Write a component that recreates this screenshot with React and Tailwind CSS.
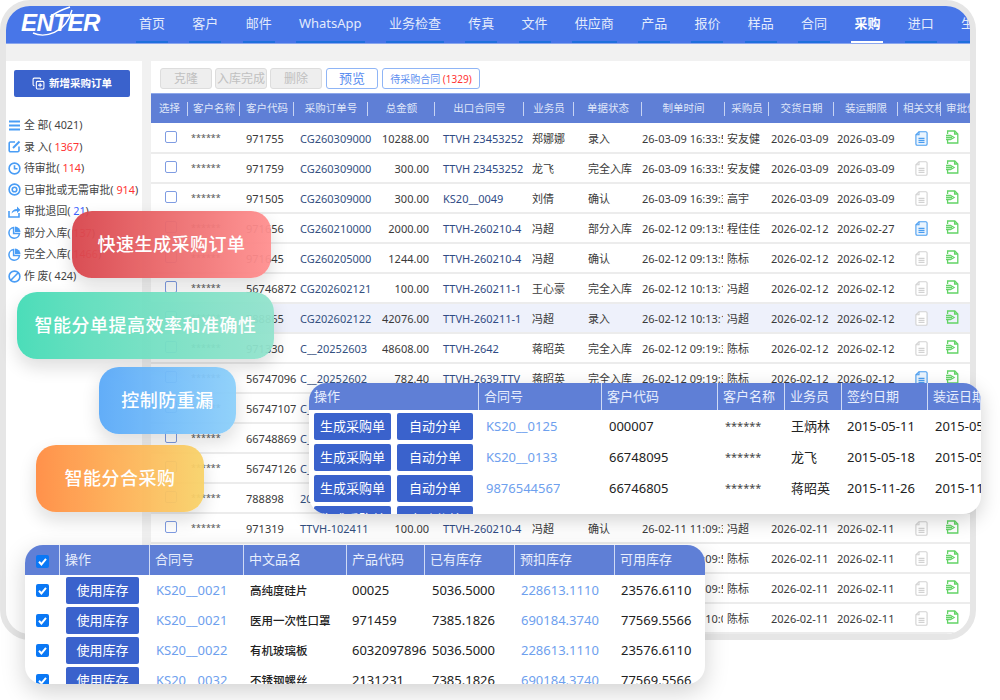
import React from "react";
import { CopyPlus } from "lucide-react";

const FONT = "font-['Noto_Sans','Noto_Sans_CJK_SC',sans-serif]";

const navItems = ["首页", "客户", "邮件", "WhatsApp", "业务检查", "传真", "文件", "供应商", "产品", "报价", "样品", "合同", "采购", "进口", "生产"];

const statusItems = [
  { label: "全 部(", count: "4021", tone: "text-[#444]", icon: "list" },
  { label: "录 入(", count: "1367", tone: "text-[#f33]", icon: "edit" },
  { label: "待审批(", count: "114", tone: "text-[#f33]", icon: "clock" },
  { label: "已审批或无需审批(", count: "914", tone: "text-[#f33]", icon: "target" },
  { label: "审批退回(", count: "21", tone: "text-[#3a62ff]", icon: "share" },
  { label: "部分入库(", count: "137", tone: "text-[#f33]", icon: "pie" },
  { label: "完全入库(", count: "1466", tone: "text-[#f33]", icon: "pie" },
  { label: "作 废(", count: "424", tone: "text-[#444]", icon: "ban" },
];

const columns = ["选择", "客户名称", "客户代码", "采购订单号", "总金额", "出口合同号", "业务员", "单据状态", "制单时间", "采购员", "交货日期", "装运期限", "相关文档", "审批信息"];

// code, order no, amount, contract, sales, status, time, buyer, delivery, shipping, has doc
const rows = [
  ["971755", "CG260309000", "10288.00", "TTVH 23453252", "郑娜娜", "录入", "26-03-09 16:33:5", "安友健", "2026-03-09", "2026-03-09", true],
  ["971759", "CG260309000", "300.00", "TTVH 23453252", "龙飞", "完全入库", "26-03-09 16:33:5", "安友健", "2026-03-09", "2026-03-09", false],
  ["971505", "CG260309000", "300.00", "KS20__0049", "刘倩", "确认", "26-03-09 16:39:3", "高宇", "2026-03-09", "2026-03-09", false],
  ["971656", "CG260210000", "2000.00", "TTVH-260210-4", "冯超", "部分入库", "26-02-12 09:13:5", "程佳佳", "2026-02-12", "2026-02-27", true],
  ["971645", "CG260205000", "1244.00", "TTVH-260210-4", "冯超", "确认", "26-02-12 09:13:5", "陈标", "2026-02-12", "2026-02-12", false],
  ["56746872", "CG202602121", "100.00", "TTVH-260211-1", "王心豪", "完全入库", "26-02-12 10:13:1", "冯超", "2026-02-12", "2026-02-12", false],
  ["788865", "CG202602122", "42076.00", "TTVH-260211-1", "冯超", "录入", "26-02-12 10:13:1", "冯超", "2026-02-12", "2026-02-12", false],
  ["971330", "C__20252603", "48608.00", "TTVH-2642", "蒋昭英", "完全入库", "26-02-12 09:19:3", "陈标", "2026-02-12", "2026-02-12", false],
  ["56747096", "C__20252602", "782.40", "TTVH-2639,TTV", "蒋昭英", "完全入库", "26-02-12 09:19:3", "陈标", "2026-02-12", "2026-02-12", true],
  ["56747107", "C__20252601", "1200.00", "TTVH-2638", "蒋昭英", "完全入库", "26-02-12 09:19:3", "陈标", "2026-02-12", "2026-02-12", false],
  ["66748869", "C__20252600", "960.00", "TTVH-2637", "蒋昭英", "完全入库", "26-02-12 09:19:3", "陈标", "2026-02-12", "2026-02-12", false],
  ["56747126", "C__20252599", "640.00", "TTVH-2636", "蒋昭英", "完全入库", "26-02-12 09:19:3", "陈标", "2026-02-12", "2026-02-12", false],
  ["788898", "2026021101", "300.00", "TTVH-2635", "冯超", "确认", "26-02-11 11:09:3", "冯超", "2026-02-11", "2026-02-11", false],
  ["971319", "TTVH-102411", "100.00", "TTVH-260210-4", "冯超", "确认", "26-02-11 11:09:3", "冯超", "2026-02-11", "2026-02-11", false],
  ["971318", "TTVH-102410", "100.00", "TTVH-260210-4", "冯超", "确认", "26-02-11 11:09:5", "陈标", "2026-02-11", "2026-02-11", false],
  ["971317", "TTVH-102409", "100.00", "TTVH-260210-4", "冯超", "确认", "26-02-11 11:09:5", "陈标", "2026-02-11", "2026-02-11", false],
  ["971316", "TTVH-102408", "100.00", "TTVH-260210-4", "冯超", "确认", "26-02-11 11:10:0", "陈标", "2026-02-11", "2026-02-11", false],
];

const contracts = [
  ["KS20__0125", "000007", "王炳林", "2015-05-11", "2015-05-11"],
  ["KS20__0133", "66748095", "龙飞", "2015-05-18", "2015-05-18"],
  ["98765445678", "66746805", "蒋昭英", "2015-11-26", "2015-11-26"],
  ["", "", "", "", ""],
];

const stock = [
  ["KS20__0021", "高纯度硅片", "00025", "5036.5000", "228613.1110", "23576.6110"],
  ["KS20__0021", "医用一次性口罩", "971459", "7385.1826", "690184.3740", "77569.5566"],
  ["KS20__0022", "有机玻璃板", "6032097896", "5036.5000", "228613.1110", "23576.6110"],
  ["KS20__0032", "不锈钢螺丝", "2131231", "7385.1826", "690184.3740", "77569.5566"],
];

function StatusIcon({ type }) {
  const cls = "w-[13px] h-[13px] shrink-0";
  const p = { fill: "none", stroke: "#4a9df5", strokeWidth: 1.6 };
  if (type === "list")
    return (
      <svg viewBox="0 0 13 13" className={cls} {...p} strokeWidth="1.8">
        <path d="M1 2.5h11M1 6.5h11M1 10.5h11" />
      </svg>
    );
  if (type === "edit")
    return (
      <svg viewBox="0 0 13 13" className={cls} {...p}>
        <path d="M7 2H2.5A1.2 1.2 0 0 0 1.2 3.2v7.3a1.2 1.2 0 0 0 1.3 1.2h7.3a1.2 1.2 0 0 0 1.2-1.2V6.5" />
        <path d="M5 8l6.5-6.5" strokeWidth="2" />
      </svg>
    );
  if (type === "clock")
    return (
      <svg viewBox="0 0 13 13" className={cls} {...p}>
        <circle cx="6.5" cy="6.5" r="5.4" />
        <path d="M6.5 3.2v3.5h3" />
      </svg>
    );
  if (type === "target")
    return (
      <svg viewBox="0 0 13 13" className={cls} {...p}>
        <circle cx="6.5" cy="6.5" r="5.4" />
        <circle cx="6.5" cy="6.5" r="2.3" />
      </svg>
    );
  if (type === "share")
    return (
      <svg viewBox="0 0 13 13" className={cls} {...p}>
        <path d="M1 6v6h10V8" />
        <path d="M3.5 8.5C4 5.5 6 4 9 4V1.5L12.5 5 9 8V6C7 6 5 6.8 3.5 8.5z" fill="#4a9df5" stroke="none" />
      </svg>
    );
  if (type === "pie")
    return (
      <svg viewBox="0 0 13 13" className={cls}>
        <path d="M5.6 1.6a5.3 5.3 0 1 0 5.9 5.9H5.6z" fill="none" stroke="#4a9df5" strokeWidth="1.5" />
        <path d="M7 .5A5.6 5.6 0 0 1 12.5 6H7z" fill="#4a9df5" />
      </svg>
    );
  return (
    <svg viewBox="0 0 13 13" className={cls} {...p}>
      <circle cx="6.5" cy="6.5" r="5.4" />
      <path d="M2.8 10.2l7.4-7.4" />
    </svg>
  );
}

function DocIcon({ active }) {
  const c = active ? "#4a9df0" : "#d2d2d2";
  return (
    <svg viewBox="0 0 13 15" className="w-[13px] h-[15px]" fill="none" stroke={c} strokeWidth="1.1">
      <path d="M4 .7h6.8a1.3 1.3 0 0 1 1.3 1.3v11a1.3 1.3 0 0 1-1.3 1.3H2.2A1.3 1.3 0 0 1 .9 13V3.8z" fill={active ? "#eaf4fe" : "#fff"} />
      <path d="M4 .7v3.1H.9" />
      <path d="M3.5 7.4h6M3.5 9.4h6M3.5 11.4h6" />
    </svg>
  );
}

function GreenIcon() {
  return (
    <svg viewBox="0 0 13 14" className="w-[13px] h-[14px]" fill="none" stroke="#62d465" strokeWidth="1.3">
      <path d="M1.6 4V1h7.2l3 3v9H1.6v-3" />
      <path d="M8.6 1v3h3" />
      <path d="M0 5.5h4.5L8 7.5l-3.5 2H0" />
      <path d="M0 7.5h6" />
    </svg>
  );
}

function Tick() {
  return (
    <span className="w-[13px] h-[13px] rounded-[2px] bg-[#0a78f5] flex items-center justify-center">
      <svg viewBox="0 0 13 13" className="w-[13px] h-[13px]" fill="none" stroke="#fff" strokeWidth="2">
        <path d="M3 6.8l2.4 2.6L10 3.8" />
      </svg>
    </span>
  );
}

function Bubble({ className, children }) {
  return (
    <div className={`absolute h-[67px] rounded-[20px] flex items-center justify-center text-white text-[18px] font-medium tracking-[.5px] shadow-[0_8px_18px_rgba(0,0,0,0.14)] opacity-95 ${className}`}>
      {children}
    </div>
  );
}

const TOOL_DISABLED = "h-[21px] w-[52px] rounded-[3px] border border-[#ddd] bg-[#eee] text-[#c0c0c0] text-[12px] leading-none whitespace-nowrap";
const MAIN_GRID = "grid grid-cols-[37px_52px_54px_74px_67px_89px_50px_68px_83px_44px_65px_64px_43px_29px]";
const CONTRACT_GRID = "grid grid-cols-[170px_123px_116px_67px_57px_86px_53px]";
const STOCK_GRID = "grid grid-cols-[35px_90px_94px_103px_78px_90px_100px_90px]";

export default function App() {
  return (
    <div className={`relative w-[1000px] h-[700px] bg-white overflow-hidden ${FONT}`}>
      {/* App frame */}
      <div className="w-[976px] h-[640px] border-[6px] border-[#e6e6e6] rounded-[30px] overflow-hidden bg-[#f1f1f1] flex flex-col">
        {/* Top nav */}
        <header className="h-[38px] shrink-0 bg-[#4876e8] flex items-stretch border-b border-[#8aa6ee]">
          <div className="w-[130px] shrink-0 relative flex items-center pl-[15px] pb-[3px]">
            <span className="font-['Liberation_Sans',sans-serif] italic font-bold text-[24px] leading-none text-white tracking-[-0.5px]">ENTER</span>
            <svg viewBox="0 0 60 36" className="absolute left-[22px] top-0 w-[60px] h-[36px]" fill="none" stroke="#fff" strokeWidth="1.4">
              <path d="M5 27C16 32 38 28 44 4" />
              <path d="M22 11C28 6 36 3 42 1" />
            </svg>
          </div>
          <nav className="flex items-stretch gap-[21.3px] whitespace-nowrap">
            {navItems.map((item) => {
              const active = item === "采购";
              return (
                <div
                  key={item}
                  className={`px-[3px] flex items-center text-[13px] border-b-2 ${active ? "border-white text-white font-semibold" : "border-[#1f6fdc] text-[#e3ebfc]"}`}
                >
                  {item}
                </div>
              );
            })}
          </nav>
        </header>

        <div className="h-[17px] shrink-0" />

        <div className="flex-1 flex min-h-0">
          {/* Sidebar */}
          <aside className="w-[136px] shrink-0 bg-white">
            <button className="mt-[9px] ml-[8px] w-[116px] h-[27px] rounded-[2px] bg-[#3a62cc] text-white text-[10.5px] font-semibold flex items-center justify-center gap-[4px]">
              <CopyPlus className="w-[13px] h-[13px]" />
              新增采购订单
            </button>
            <ul className="mt-[19px] ml-[2px] flex flex-col gap-[3.6px]">
              {statusItems.map((s) => (
                <li key={s.label} className="h-[18px] flex items-center gap-[3px] text-[10.8px] text-[#444] whitespace-nowrap">
                  <StatusIcon type={s.icon} />
                  <span>
                    {s.label} <span className={s.tone}>{s.count}</span>)
                  </span>
                </li>
              ))}
            </ul>
          </aside>

          <div className="w-[9px] shrink-0" />

          {/* Main table */}
          <main className="flex-1 min-w-0 bg-white overflow-hidden">
            <div className="h-[32px] pl-[9px] pt-[7px] flex items-start gap-[3px]">
              <button className={TOOL_DISABLED}>克隆</button>
              <button className={TOOL_DISABLED}>入库完成</button>
              <button className={TOOL_DISABLED}>删除</button>
              <button className="ml-[1px] h-[21px] w-[52px] rounded-[3px] border border-[#8fb5f6] text-[#5b8ef0] text-[13px] leading-none">预览</button>
              <button className="ml-[1px] h-[21px] w-[98px] rounded-[3px] border border-[#8fb5f6] text-[#5b8ef0] text-[10px] leading-none whitespace-nowrap">
                待采购合同 <span className="text-[#f33]">(1329)</span>
              </button>
            </div>

            <div className={`${MAIN_GRID} h-[30px] bg-[#5f7fd6] border-t border-[#8ea8ea] text-[10.5px] text-[#dfe6f9]`}>
              {columns.map((c, i) => (
                <div
                  key={c}
                  className={`relative flex items-center overflow-hidden whitespace-nowrap ${i < 12 ? "justify-center" : "justify-start pl-[5px]"}`}
                >
                  {c}
                  {i < columns.length - 1 && <span className="absolute right-0 top-[8px] h-[14px] w-px bg-[#c6d3f3]" />}
                </div>
              ))}
            </div>

            <div className="h-px" />

            {rows.map((r, i) => (
              <div key={i} className={`${MAIN_GRID} h-[30px] pt-[2px] border-b-2 border-[#ececec] items-center text-[11px] text-[#3a3a3a] whitespace-nowrap ${r[0] === "788865" ? "bg-[#eef1fb]" : ""}`}>
                <div className="flex justify-center pl-[3px] -mt-[4px]">
                  <span className="w-[12px] h-[12px] rounded-[2px] border border-[#7f9ce2] bg-white" />
                </div>
                <div className="pl-[3px] text-[9px] text-[#555] -mt-[3px]">******</div>
                <div className="pl-[6px]">{r[0]}</div>
                <div className="pl-[6px] text-[#33507f]">{r[1]}</div>
                <div className="pr-[6px] text-right">{r[2]}</div>
                <div className="pl-[8px] text-[#2f4b85]">{r[3]}</div>
                <div className="pl-[8px]">{r[4]}</div>
                <div className="pl-[14px]">{r[5]}</div>
                <div className="overflow-hidden w-[81px]">{r[6]}</div>
                <div className="pl-[2px]">{r[7]}</div>
                <div className="pl-[2px]">{r[8]}</div>
                <div className="pl-[3px]">{r[9]}</div>
                <div className="pl-[17px] flex -mt-[2px]"><DocIcon active={r[10]} /></div>
                <div className="pl-[5px] flex -mt-[4px]"><GreenIcon /></div>
              </div>
            ))}
          </main>
        </div>
      </div>

      {/* Feature bubbles */}
      <Bubble className="left-[72px] top-[211px] w-[199px] bg-gradient-to-r from-[#d8444c] to-[#ff9090]">快速生成采购订单</Bubble>
      <Bubble className="left-[17px] top-[292px] w-[257px] bg-gradient-to-r from-[#42dcb6] to-[#93e3cd]">智能分单提高效率和准确性</Bubble>
      <Bubble className="left-[99px] top-[367px] w-[137px] bg-gradient-to-r from-[#5aa9f8] to-[#8dd0fa]">控制防重漏</Bubble>
      <Bubble className="left-[36px] top-[445px] w-[168px] bg-gradient-to-r from-[#ff8c42] to-[#f8d36a]">智能分合采购</Bubble>

      {/* Contract popup */}
      <div className="absolute left-[309px] top-[383px] w-[672px] h-[131px] rounded-[18px] bg-white overflow-hidden shadow-[0_6px_20px_rgba(0,0,0,0.18)]">
        <div className={`${CONTRACT_GRID} h-[27px] bg-[#5f7fd6] text-[13px] text-[#e8eefc]`}>
          {["操作", "合同号", "客户代码", "客户名称", "业务员", "签约日期", "装运日期"].map((h) => (
            <div key={h} className="pl-[5px] flex items-center border-r border-[#cfdaf5] whitespace-nowrap overflow-hidden">{h}</div>
          ))}
        </div>
        <div className="pt-[3px] flex flex-col gap-[4px]">
          {contracts.map((c, i) => (
            <div key={i} className={`${CONTRACT_GRID} h-[27px] items-center text-[13px] text-[#222] whitespace-nowrap`}>
              <div className="pl-[5px] flex gap-[6px]">
                <button className="w-[77px] h-[27px] rounded-[2px] bg-[#3a62cc] text-white text-[13px]">生成采购单</button>
                <button className="w-[76px] h-[27px] rounded-[2px] bg-[#3a62cc] text-white text-[13px]">自动分单</button>
              </div>
              <div className="pl-[7px] text-[#6ea0ee] overflow-hidden w-[81px]">{c[0]}</div>
              <div className="pl-[7px]">{c[1]}</div>
              <div className="pl-[7px] text-[11px] text-[#444]">{c[0] && "******"}</div>
              <div className="pl-[6px]">{c[2]}</div>
              <div className="pl-[5px]">{c[3]}</div>
              <div className="pl-[7px] overflow-hidden">{c[4]}</div>
            </div>
          ))}
        </div>
      </div>

      {/* Stock popup */}
      <div className="absolute left-[25px] top-[545px] w-[680px] h-[139px] rounded-[18px] bg-white overflow-hidden shadow-[0_8px_24px_rgba(0,0,0,0.18)]">
        <div className={`${STOCK_GRID} h-[30px] bg-[#5f7fd6] text-[13px] text-[#e8eefc]`}>
          <div className="flex items-center justify-center border-r border-[#cfdaf5] pt-[3px]"><Tick /></div>
          {["操作", "合同号", "中文品名", "产品代码", "已有库存", "预扣库存", "可用库存"].map((h) => (
            <div key={h} className="pl-[5px] flex items-center border-r border-[#cfdaf5] last:border-r-0 whitespace-nowrap">{h}</div>
          ))}
        </div>
        <div className="pt-[1px] flex flex-col gap-[0.5px]">
          {stock.map((s, i) => (
            <div key={i} className={`${STOCK_GRID} h-[29.5px] items-center text-[13px] text-[#222] whitespace-nowrap`}>
              <div className="flex justify-center"><Tick /></div>
              <div className="pl-[6px]">
                <button className="w-[73px] h-[27px] rounded-[2px] bg-[#3a62cc] text-white text-[13px]">使用库存</button>
              </div>
              <div className="pl-[6px] text-[#6ea0ee]">{s[0]}</div>
              <div className="pl-[6px] text-[11.5px] font-medium">{s[1]}</div>
              <div className="pl-[5px]">{s[2]}</div>
              <div className="pl-[7px]">{s[3]}</div>
              <div className="pl-[6px] text-[#6ea0ee]">{s[4]}</div>
              <div className="pl-[6px]">{s[5]}</div>
            </div>
          ))}
        </div>
      </div>
    </div>
  );
}
